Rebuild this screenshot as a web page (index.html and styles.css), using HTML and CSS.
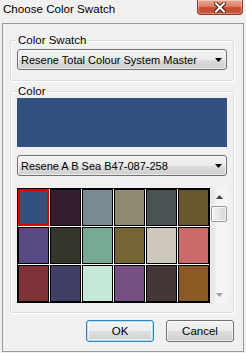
FILE: index.html
```html
<!DOCTYPE html>
<html lang="en">
<head>
    <meta charset="UTF-8">
    <title>Choose Color Swatch</title>
    <link rel="stylesheet" href="styles.css">
</head>
<body>
    <div class="window">
        <div class="titlebar">
            <span class="title">Choose Color Swatch</span>
            <button class="close-btn" title="Close">
                <svg width="12" height="11" viewBox="0 0 12 11">
                    <path d="M2 1.5 L10 9.5 M10 1.5 L2 9.5" stroke="#4a1a12" stroke-width="4" stroke-linecap="square"/>
                    <path d="M2 1.5 L10 9.5 M10 1.5 L2 9.5" stroke="#ffffff" stroke-width="2" stroke-linecap="square"/>
                </svg>
            </button>
        </div>

        <div class="client">
            <fieldset class="group">
                <legend>Color Swatch</legend>
                <div class="combo">
                    <span class="combo-text">Resene Total Colour System Master</span>
                    <svg class="combo-arrow" width="7" height="4" viewBox="0 0 7 4"><polygon points="0,0 7,0 3.5,4" fill="#000"/></svg>
                </div>
            </fieldset>

            <fieldset class="group group-color">
                <legend>Color</legend>
                <div class="preview"></div>
                <div class="combo combo-color">
                    <span class="combo-text">Resene A B Sea B47-087-258</span>
                    <svg class="combo-arrow" width="7" height="4" viewBox="0 0 7 4"><polygon points="0,0 7,0 3.5,4" fill="#000"/></svg>
                </div>

                <div class="swatch-area">
                    <div class="swatch-grid">
                        <div class="cell selected" style="background:#34507f"></div>
                        <div class="cell" style="background:#331d2f"></div>
                        <div class="cell" style="background:#798a93"></div>
                        <div class="cell" style="background:#8f8a6f"></div>
                        <div class="cell" style="background:#4a5253"></div>
                        <div class="cell" style="background:#67582f"></div>

                        <div class="cell" style="background:#5a4a84"></div>
                        <div class="cell" style="background:#36352c"></div>
                        <div class="cell" style="background:#78a994"></div>
                        <div class="cell" style="background:#746534"></div>
                        <div class="cell" style="background:#cdc8bb"></div>
                        <div class="cell" style="background:#cb6b69"></div>

                        <div class="cell" style="background:#7f3339"></div>
                        <div class="cell" style="background:#413f63"></div>
                        <div class="cell" style="background:#c4e9d9"></div>
                        <div class="cell" style="background:#764f83"></div>
                        <div class="cell" style="background:#453637"></div>
                        <div class="cell" style="background:#8a5a25"></div>
                    </div>

                    <div class="scrollbar">
                        <div class="scroll-btn">
                            <svg width="7" height="4" viewBox="0 0 7 4"><polygon points="0,4 7,4 3.5,0" fill="#404040"/></svg>
                        </div>
                        <div class="scroll-thumb"></div>
                        <div class="scroll-track"></div>
                        <div class="scroll-btn">
                            <svg width="7" height="4" viewBox="0 0 7 4"><polygon points="0,0 7,0 3.5,4" fill="#a0a0a0"/></svg>
                        </div>
                    </div>
                </div>
            </fieldset>

            <div class="buttons">
                <button class="btn btn-default">OK</button>
                <button class="btn">Cancel</button>
            </div>
        </div>
    </div>
</body>
</html>
```

FILE: styles.css
```css
/* General Styles */
* {
    box-sizing: border-box;
}

body {
    margin: 0;
    padding: 0;
    font-family: "Liberation Sans", Arial, sans-serif;
    font-size: 11px;
    color: #000;
    background-color: #f0f0f0;
}

/* Window Frame */
.window {
    width: 246px;
    height: 353px;
    display: flex;
    flex-direction: column;
    background: #f0f0f0;
}

.titlebar {
    height: 23px;
    display: flex;
    justify-content: space-between;
    align-items: flex-start;
}

.title {
    padding: 2px 0 0 3px;
    font-size: 11.6px;
    line-height: 14px;
}

.close-btn {
    width: 46px;
    height: 15px;
    margin-right: 3px;
    padding: 0;
    border: 1px solid #8a3a2a;
    border-top: none;
    border-radius: 0 0 4px 4px;
    background: linear-gradient(#eaa898 0%, #de8068 45%, #cc4a30 55%, #c4553c 100%);
    box-shadow: inset 0 0 0 1px rgba(255, 255, 255, 0.35);
    display: flex;
    align-items: center;
    justify-content: center;
}

.client {
    flex: 1;
    margin: 0 2px 1px 2px;
    border: 1px solid #9a9a9a;
    display: flex;
    flex-direction: column;
}

/* Group Boxes */
.group {
    margin: 9px 9px 0 7px;
    padding: 2px 6px 10px 6px;
    border: 1px solid #d5dfe5;
    border-radius: 3px;
    box-shadow: inset 1px 1px 0 #fff, 1px 1px 0 #fff;
    min-width: 0;
}

.group legend {
    margin-left: -1px;
    padding: 0 2px;
    font-size: 11.5px;
    line-height: 14px;
}

.group-color {
    margin-top: 3px;
    padding-top: 0;
    padding-bottom: 9px;
}

/* Combo Boxes */
.combo {
    height: 21px;
    display: flex;
    align-items: center;
    justify-content: space-between;
    padding: 0 4px 0 3px;
    border: 1px solid #707070;
    border-radius: 3px;
    background: linear-gradient(#f2f2f2 0%, #ebebeb 50%, #dddddd 51%, #cfcfcf 100%);
    box-shadow: inset 0 0 0 1px rgba(255, 255, 255, 0.6);
}

.combo-text {
    white-space: nowrap;
}

.combo-color {
    margin-top: 8px;
}

.preview {
    height: 49px;
    background: #34507f;
}

/* Swatch Grid */
.swatch-area {
    display: flex;
    gap: 1px;
    margin-top: 12px;
}

.swatch-grid {
    width: 193px;
    height: 115px;
    display: grid;
    grid-template-columns: repeat(6, 31px);
    grid-auto-rows: 37px;
    gap: 1px;
    border: 1px solid #000;
    background: #fff;
    overflow: hidden;
}

.cell {
    border: 1px solid #000;
}

.cell.selected {
    border-color: #e00000;
    box-shadow: inset 0 0 0 1px #e00000;
}

.scrollbar {
    width: 16px;
    height: 115px;
    display: flex;
    flex-direction: column;
    background: linear-gradient(to right, #e3e3e3, #f4f4f4 40%, #f4f4f4);
}

.scroll-btn {
    height: 17px;
    display: flex;
    align-items: center;
    justify-content: center;
}

.scroll-thumb {
    height: 16px;
    margin-top: 1px;
    border: 1px solid #979797;
    border-radius: 2px;
    background: linear-gradient(to right, #f4f4f4, #e6e6e6 50%, #d4d4d4);
    box-shadow: inset 0 0 0 1px rgba(255, 255, 255, 0.8);
}

.scroll-track {
    flex: 1;
}

/* Dialog Buttons */
.buttons {
    display: flex;
    justify-content: flex-end;
    gap: 12px;
    margin: 7px 9px 0 0;
}

.btn {
    width: 68px;
    height: 22px;
    padding: 0;
    font-family: inherit;
    font-size: 11.5px;
    color: #000;
    border: 1px solid #707070;
    border-radius: 3px;
    background: linear-gradient(#f2f2f2 0%, #ebebeb 50%, #dddddd 51%, #cfcfcf 100%);
    box-shadow: inset 0 0 0 1px rgba(255, 255, 255, 0.7);
}

.btn-default {
    border-color: #3c7fb1;
    box-shadow: inset 0 0 0 1px #a8e4fc, inset 0 0 0 2px rgba(255, 255, 255, 0.6);
    background: linear-gradient(#f4f4f4 0%, #ececec 50%, #dfdfdf 51%, #d2d2d2 100%);
}
```
